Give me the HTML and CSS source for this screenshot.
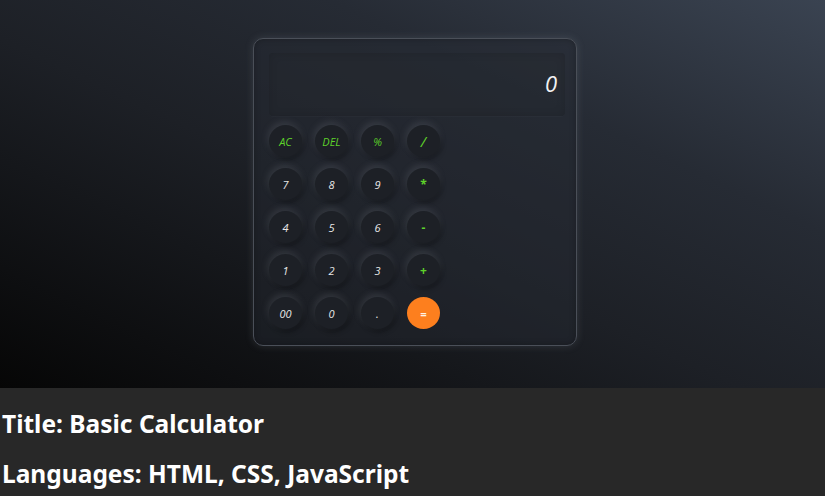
FILE: index.html
```html
<!DOCTYPE html>
<html>
<head>
<meta charset="utf-8">
<link rel="stylesheet" href="styles.css">
</head>
<body>
<section class="hero">
  <div class="calc">
    <div class="display">0</div>
    <div class="keys">
      <button class="key op">AC</button>
      <button class="key op">DEL</button>
      <button class="key op">%</button>
      <button class="key op big">/</button>
      <button class="key">7</button>
      <button class="key">8</button>
      <button class="key">9</button>
      <button class="key op sym">*</button>
      <button class="key">4</button>
      <button class="key">5</button>
      <button class="key">6</button>
      <button class="key op sym">-</button>
      <button class="key">1</button>
      <button class="key">2</button>
      <button class="key">3</button>
      <button class="key op sym">+</button>
      <button class="key">00</button>
      <button class="key">0</button>
      <button class="key">.</button>
      <button class="key eq">=</button>
    </div>
  </div>
</section>
<section class="info">
  <p class="line">Title: Basic Calculator</p>
  <p class="line">Languages: HTML, CSS, JavaScript</p>
</section>
</body>
</html>
```
FILE: styles.css
```css
* { box-sizing: border-box; }
html, body { margin: 0; padding: 0; }
body {
  width: 825px;
  height: 496px;
  overflow: hidden;
  background: #282828;
}
.hero {
  height: 388px;
  background: linear-gradient(to top right, #060606 0%, #1d2026 45%, #262b34 70%, #3a4351 100%);
  display: flex;
  justify-content: center;
  align-items: flex-start;
  padding: 38px 0 0 5px;
}
.calc {
  width: 324px;
  height: 308px;
  border: 1px solid #4a4f58;
  border-radius: 10px;
  background: rgba(38, 42, 50, 0.45);
  box-shadow: 0 0 8px rgba(160, 170, 185, 0.18), inset 0 0 6px rgba(0,0,0,0.25);
  padding: 14px 11px 0 15px;
  display: flex;
  flex-direction: column;
}
.display {
  height: 63px;
  border-radius: 4px;
  background: rgba(34, 38, 45, 0.25);
  box-shadow: inset 0 0 10px rgba(0,0,0,0.12), 0 1px 0 rgba(255,255,255,0.02);
  color: #f2f2f2;
  font-family: "Open Sans", sans-serif;
  font-style: italic;
  font-size: 22px;
  display: flex;
  align-items: center;
  justify-content: flex-end;
  padding: 0 8px 4px 0;
}
.keys {
  margin-top: 9px;
  display: grid;
  grid-template-columns: repeat(4, 33px);
  grid-auto-rows: 32px;
  column-gap: 13px;
  row-gap: 11px;
}
.key {
  width: 33px;
  height: 32px;
  border: none;
  border-radius: 50%;
  background: #1d2026;
  color: #e8e8e8;
  font-family: "Open Sans", sans-serif;
  font-style: italic;
  font-weight: 500;
  font-size: 11px;
  padding: 0;
  display: flex;
  align-items: center;
  justify-content: center;
  box-shadow: -1px -3px 7px rgba(130, 135, 145, 0.22), 2px 3px 5px rgba(0, 0, 0, 0.3);
}
.key.op { color: #5ed22a; }
.key.sym { font-weight: 700; font-size: 12px; font-style: normal; }
.key.big { font-size: 15px; font-weight: 400; }
.key.eq {
  background: #fd7f1e;
  color: #fff3e6;
  font-weight: 700;
  box-shadow: none;
}
.info {
  padding: 21px 0 0 2px;
}
.line {
  margin: 0;
  height: 50px;
  line-height: 30px;
  color: #ffffff;
  font-family: "Noto Sans", sans-serif;
  font-weight: 700;
  font-size: 24.5px;
}
```
